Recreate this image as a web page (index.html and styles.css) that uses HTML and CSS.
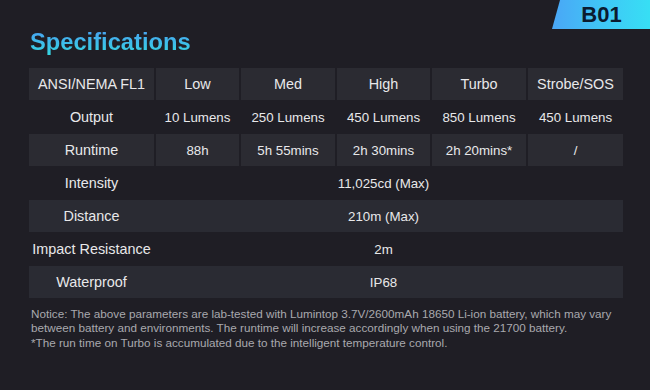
FILE: index.html
```html
<!DOCTYPE html>
<html>
<head>
<meta charset="utf-8">
<link rel="stylesheet" href="styles.css">
</head>
<body>
<div class="page">
  <div class="badge">B01</div>
  <h1 class="title">Specifications</h1>
  <div class="table">
    <div class="row cells head">
      <div class="cell label">ANSI/NEMA FL1</div>
      <div class="cell">Low</div>
      <div class="cell">Med</div>
      <div class="cell">High</div>
      <div class="cell">Turbo</div>
      <div class="cell">Strobe/SOS</div>
    </div>
    <div class="row">
      <div class="cell label">Output</div>
      <div class="cell">10 Lumens</div>
      <div class="cell">250 Lumens</div>
      <div class="cell">450 Lumens</div>
      <div class="cell">850 Lumens</div>
      <div class="cell">450 Lumens</div>
    </div>
    <div class="row cells">
      <div class="cell label">Runtime</div>
      <div class="cell">88h</div>
      <div class="cell">5h 55mins</div>
      <div class="cell">2h 30mins</div>
      <div class="cell">2h 20mins*</div>
      <div class="cell">/</div>
    </div>
    <div class="row">
      <div class="cell label">Intensity</div>
      <div class="cell span">11,025cd (Max)</div>
    </div>
    <div class="row band">
      <div class="cell label">Distance</div>
      <div class="cell span">210m (Max)</div>
    </div>
    <div class="row">
      <div class="cell label">Impact Resistance</div>
      <div class="cell span">2m</div>
    </div>
    <div class="row band">
      <div class="cell label">Waterproof</div>
      <div class="cell span">IP68</div>
    </div>
  </div>
  <p class="notice">Notice: The above parameters are lab-tested with Lumintop 3.7V/2600mAh 18650 Li-ion battery, which may vary<br>between battery and environments. The runtime will increase accordingly when using the 21700 battery.<br>*The run time on Turbo is accumulated due to the intelligent temperature control.</p>
</div>
</body>
</html>
```

FILE: styles.css
```css
html, body {
  margin: 0;
  padding: 0;
  background: #1f1e25;
}

.page {
  position: relative;
  width: 650px;
  height: 390px;
  box-sizing: border-box;
  padding: 28px 0 0 29px;
  font-family: "Liberation Sans", Arial, sans-serif;
  overflow: hidden;
}

.badge {
  position: absolute;
  top: 0;
  right: 0;
  width: 98px;
  height: 29px;
  background: linear-gradient(90deg, #4aa6f6 0%, #3fc8f6 55%, #37dff4 100%);
  clip-path: polygon(8px 0, 100% 0, 100% 100%, 0 100%);
  color: #0b1b30;
  font-weight: bold;
  font-size: 22px;
  line-height: 29px;
  text-align: center;
  padding-left: 1px;
  box-sizing: border-box;
}

.title {
  margin: 0 0 12px 1px;
  font-size: 23.7px;
  line-height: 28px;
  font-weight: bold;
  background: linear-gradient(180deg, #4b9cf2 0%, #3fbbea 50%, #34d8df 100%);
  -webkit-background-clip: text;
  background-clip: text;
  color: transparent;
  display: inline-block;
}

.table {
  display: flex;
  flex-direction: column;
  gap: 1px;
  width: 594px;
}

.row {
  display: grid;
  grid-template-columns: 125px 83px 94px 93px 94px 95px;
  column-gap: 2px;
  height: 32px;
}

.cell {
  display: flex;
  align-items: center;
  justify-content: center;
  color: #e8e8ea;
  font-size: 13.3px;
  white-space: nowrap;
}

.label,
.head .cell {
  font-size: 14.4px;
}

.cells .cell {
  background: #2b2b32;
}

.band {
  background: #2a2b33;
}

.span {
  grid-column: 4;
}

.notice {
  margin: 9px 0 0 2px;
  font-size: 11.7px;
  line-height: 14.3px;
  color: #a9a9ae;
}
```
